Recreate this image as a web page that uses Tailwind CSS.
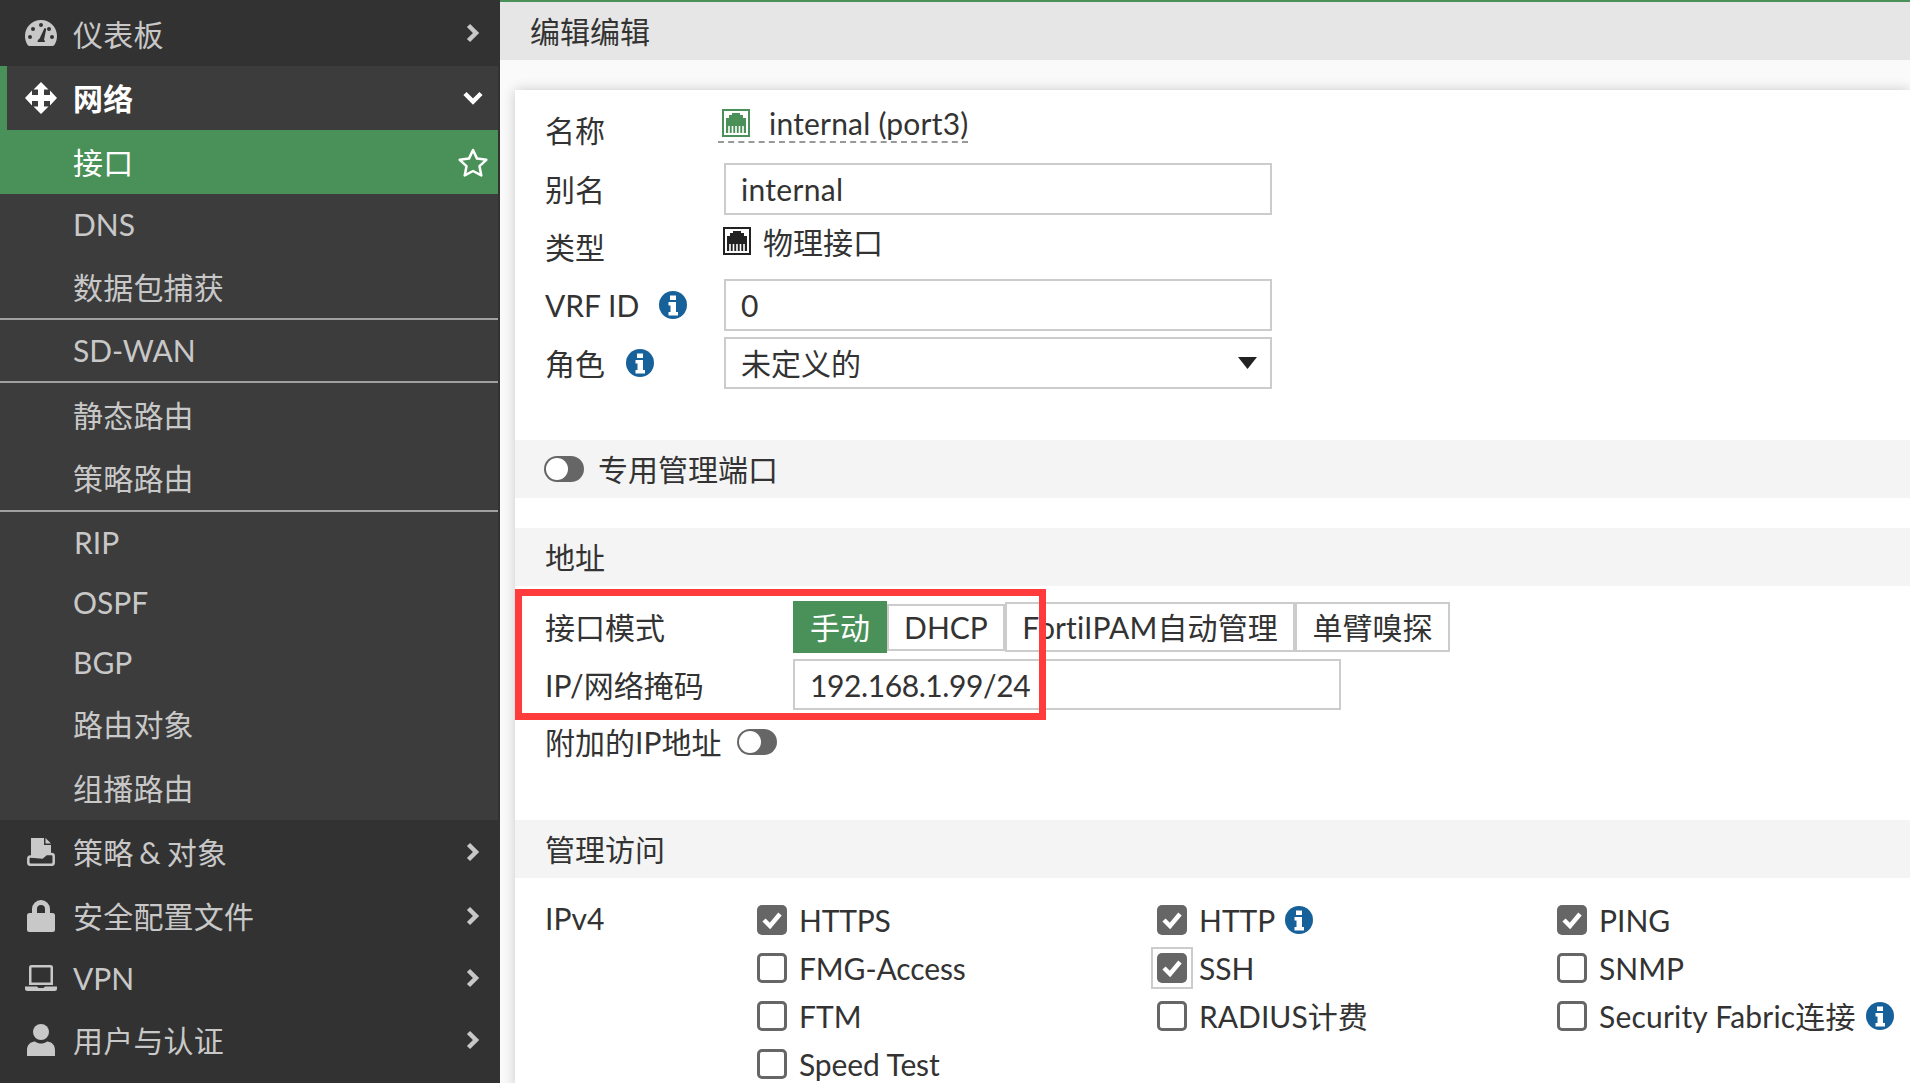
<!DOCTYPE html>
<html lang="zh">
<head>
  <meta charset="UTF-8">
  <title>编辑编辑</title>
  <script src="https://cdn.jsdelivr.net/npm/@tailwindcss/browser@4"></script>
</head>
<body class="h-[1083px] overflow-hidden bg-white font-['Lato','Noto_Sans_CJK_SC',sans-serif] text-[30px] text-[#333]">
<div class="flex h-[1083px]">

  <!-- Sidebar -->
  <nav class="w-[500px] shrink-0 bg-[#323232] text-[#c8c8c8] leading-[36px] tracking-[0.2px]">
    <div class="flex h-[66px] items-center">
      <svg class="ml-[25px] w-[32px] h-[26px]" viewBox="0 0 32 26"><path fill="#c8c8c8" fill-rule="evenodd" d="M16 0C7 0 0 7 0 16c0 3 .8 6 2.300 8.500.4.700 1.100 1.500 2 1.500h23.400c.9 0 1.600-.8 2-1.500C31.200 22 32 19 32 16 32 7 25 0 16 0zM5 19a2 2 0 1 1 0-4 2 2 0 0 1 0 4zm3-8a2 2 0 1 1 0-4 2 2 0 0 1 0 4zm8-4a2 2 0 1 1 0-4 2 2 0 0 1 0 4zm-3.500 15c0-1.500.8-2.700 2-3.300L19.500 8l1.800.7-2.300 11c.6.600 1 1.400 1 2.300h-7.500zM24 11a2 2 0 1 1 0-4 2 2 0 0 1 0 4zm3 8a2 2 0 1 1 0-4 2 2 0 0 1 0 4z"/></svg>
      <span class="ml-[16px] pt-[1px]">仪表板</span>
      <svg class="ml-auto mr-[20px] w-[14px] h-[20px]" viewBox="0 0 14 20"><path fill="none" stroke="#c8c8c8" stroke-width="4.500" d="M2.500 2.500 10 10l-7.500 7.500"/></svg>
    </div>

    <div class="w-[498px] bg-[#3c3c3c]">
      <div class="flex h-[64px] items-center border-l-[7px] border-[#4a9159] bg-[#3c3c3c] font-bold text-white">
        <svg class="ml-[18px] w-[32px] h-[32px]" viewBox="0 0 32 32"><path fill="#fff" d="M16 0l7.500 7.500h-4.500V13h6V8.500L32 16l-7 7.500V19h-6v5.500h4.500L16 32l-7.500-7.500H13V19H7v4.500L0 16l7-7.500V13h6V7.500H8.500z"/></svg>
        <span class="ml-[16px]">网络</span>
        <svg class="ml-auto mr-[15px] w-[20px] h-[14px]" viewBox="0 0 20 14"><path fill="none" stroke="#fff" stroke-width="4.500" d="M2 2.500 10 10.500l8-8"/></svg>
      </div>
      <div class="flex h-[64px] items-center bg-[#4a9159] pl-[73px] text-white">
        <span>接口</span>
        <svg class="ml-auto mr-[10px] w-[30px] h-[29px]" viewBox="0 0 30 29"><path fill="none" stroke="#fff" stroke-width="2.500" stroke-linejoin="round" d="M15 2l4 8.600 9.300 1.200-6.800 6.400 1.800 9.200L15 23l-8.300 4.400 1.800-9.200-6.800-6.400L11 10.600z"/></svg>
      </div>
      <div class="flex h-[61px] items-center pb-[2px] pl-[73px] tracking-normal">DNS</div>
      <div class="flex h-[63px] items-center pl-[73px]">数据包捕获</div>
      <div class="h-[2px] bg-[#a0a0a0]"></div>
      <div class="flex h-[61px] items-center pb-[2px] pl-[73px] tracking-normal">SD-WAN</div>
      <div class="h-[2px] bg-[#a0a0a0]"></div>
      <div class="flex h-[64px] items-center pb-[1px] pl-[73px]">静态路由</div>
      <div class="flex h-[63px] items-center pb-[1px] pl-[73px]">策略路由</div>
      <div class="h-[2px] bg-[#a0a0a0]"></div>
      <div class="flex h-[60px] items-center pl-[74px] tracking-normal">RIP</div>
      <div class="flex h-[60px] items-center pl-[73px] tracking-normal">OSPF</div>
      <div class="flex h-[60px] items-center pl-[73px] tracking-normal">BGP</div>
      <div class="flex h-[64px] items-center pl-[73px]">路由对象</div>
      <div class="flex h-[64px] items-center pl-[73px]">组播路由</div>
    </div>

    <div class="flex h-[64px] items-center">
      <svg class="ml-[27px] w-[28px] h-[28px]" viewBox="0 0 28 28"><path fill="#c8c8c8" d="M4 0h13v7h7v9h-5l-4 3.500H4z"/><path fill="#c8c8c8" d="M18.500 0 24 5.500h-5.500z"/><path fill="none" stroke="#c8c8c8" stroke-width="2.500" d="M4 18.500H3.500q-2.200 0-2.200 2.500v3.500q0 2.300 2.500 2.300h20.400q2.500 0 2.500-2.300V18q0-2-2.500-2h-5l-4 3.500z"/></svg>
      <span class="ml-[18px] [word-spacing:-2px]">策略 &amp; 对象</span>
      <svg class="ml-auto mr-[20px] w-[14px] h-[20px]" viewBox="0 0 14 20"><path fill="none" stroke="#c8c8c8" stroke-width="4.500" d="M2.500 2.500 10 10l-7.500 7.500"/></svg>
    </div>
    <div class="flex h-[64px] items-center">
      <svg class="ml-[27px] w-[28px] h-[32px]" viewBox="0 0 28 32"><path fill="#c8c8c8" fill-rule="evenodd" d="M5 13V9a9 9 0 0 1 18 0v4h2.500a2.500 2.500 0 0 1 2.500 2.500v14a2.500 2.500 0 0 1-2.500 2.500h-23A2.500 2.500 0 0 1 0 29.500v-14A2.500 2.500 0 0 1 2.500 13zm5 0h8V9a4 4 0 0 0-8 0z"/></svg>
      <span class="ml-[18px]">安全配置文件</span>
      <svg class="ml-auto mr-[20px] w-[14px] h-[20px]" viewBox="0 0 14 20"><path fill="none" stroke="#c8c8c8" stroke-width="4.500" d="M2.500 2.500 10 10l-7.500 7.500"/></svg>
    </div>
    <div class="flex h-[60px] items-center">
      <svg class="ml-[25px] w-[32px] h-[26px]" viewBox="0 0 32 26"><path fill="#c8c8c8" fill-rule="evenodd" d="M4 2.500A2.500 2.500 0 0 1 6.500 0h19A2.500 2.500 0 0 1 28 2.500V20H4zM6.500 2.500V17.500h19V2.500z"/><path fill="#c8c8c8" d="M0 21.500h12l1.500 1.500h5l1.500-1.500h12v2a2.500 2.500 0 0 1-2.500 2.500h-27A2.500 2.500 0 0 1 0 23.500z"/></svg>
      <span class="ml-[16px] tracking-normal">VPN</span>
      <svg class="ml-auto mr-[20px] w-[14px] h-[20px]" viewBox="0 0 14 20"><path fill="none" stroke="#c8c8c8" stroke-width="4.500" d="M2.500 2.500 10 10l-7.500 7.500"/></svg>
    </div>
    <div class="flex h-[64px] items-center">
      <svg class="ml-[27px] w-[28px] h-[32px]" viewBox="0 0 28 32"><circle cx="14" cy="8" r="8" fill="#c8c8c8"/><path fill="#c8c8c8" d="M0 32v-6c0-5 3.500-8.500 8-8.500 2 1.500 4 2 6 2s4-.5 6-2c4.500 0 8 3.500 8 8.500v6z"/></svg>
      <span class="ml-[18px]">用户与认证</span>
      <svg class="ml-auto mr-[20px] w-[14px] h-[20px]" viewBox="0 0 14 20"><path fill="none" stroke="#c8c8c8" stroke-width="4.500" d="M2.500 2.500 10 10l-7.500 7.500"/></svg>
    </div>
  </nav>

  <!-- Main -->
  <main class="flex-1 min-w-0 bg-[#fafafa]">
    <div class="flex h-[60px] items-center border-t-2 border-[#4a9159] bg-[#e6e6e6] pl-[30px]">编辑编辑</div>

    <div class="relative ml-[15px] mt-[30px] h-[1000px] bg-white shadow-[0_0_12px_rgba(0,0,0,0.2)] pt-[15px] leading-[36px]">

      <!-- 名称 -->
      <div class="flex h-[58px] pl-[30px]">
        <span class="w-[179px] pt-[7px]">名称</span>
        <div class="-ml-[6px] flex h-[38px] items-center border-b-2 border-dashed border-[#999] pl-[4px]">
          <svg class="w-[28px] h-[28px]" viewBox="0 0 28 28"><rect x="1" y="1" width="26" height="26" fill="#fff" stroke="#4a9159" stroke-width="2"/><path fill="#4a9159" d="M4 16V9h3V6h3V4h8v2h3v3h3v7zM4 16h20v8H4z"/><path stroke="#fff" stroke-width="1.600" d="M7 17v7M10.500 17v7M14 17v7M17.500 17v7M21 17v7"/></svg>
          <span class="ml-[19px] tracking-[0.2px]">internal (port3)</span>
        </div>
      </div>

      <!-- 别名 -->
      <div class="flex h-[52px] items-center pl-[30px]">
        <span class="w-[179px]">别名</span>
        <div class="flex h-[52px] w-[548px] items-center border-2 border-[#ccc] pl-[15px] tracking-[0.3px]">internal</div>
      </div>

      <!-- 类型 -->
      <div class="mt-[6px] flex h-[58px] pl-[30px]">
        <span class="w-[178px] pt-[8px]">类型</span>
        <svg class="mt-[6px] w-[28px] h-[28px]" viewBox="0 0 28 28"><rect x="1" y="1" width="26" height="26" fill="#fff" stroke="#222" stroke-width="2"/><path fill="#222" d="M4 16V9h3V6h3V4h8v2h3v3h3v7zM4 16h20v8H4z"/><path stroke="#fff" stroke-width="1.600" d="M7 17v7M10.500 17v7M14 17v7M17.500 17v7M21 17v7"/></svg>
        <span class="ml-[12px] pt-[3px]">物理接口</span>
      </div>

      <!-- VRF ID -->
      <div class="flex h-[52px] items-center pl-[30px]">
        <span class="flex w-[179px] items-center">VRF ID
          <svg class="ml-[20px] w-[28px] h-[28px]" viewBox="0 0 28 28"><circle cx="14" cy="14" r="14" fill="#17619a"/><path fill="#fff" d="M11 4.500h6v4.500h-6zM9.500 11h7.500v10h2v3.500H9.500V21h2v-6.500h-2z"/></svg>
        </span>
        <div class="flex h-[52px] w-[548px] items-center border-2 border-[#ccc] pl-[15px]">0</div>
      </div>

      <!-- 角色 -->
      <div class="mt-[6px] flex h-[52px] items-center pl-[30px]">
        <span class="flex w-[179px] items-center">角色
          <svg class="ml-[21px] w-[28px] h-[28px]" viewBox="0 0 28 28"><circle cx="14" cy="14" r="14" fill="#17619a"/><path fill="#fff" d="M11 4.500h6v4.500h-6zM9.500 11h7.500v10h2v3.500H9.500V21h2v-6.500h-2z"/></svg>
        </span>
        <div class="flex h-[52px] w-[548px] items-center border-2 border-[#ccc] pl-[15px]">未定义的
          <svg class="ml-auto mr-[13px] w-[19px] h-[12px]" viewBox="0 0 19 12"><path fill="#222" d="M0 0h19l-9.500 12z"/></svg>
        </div>
      </div>

      <!-- 专用管理端口 -->
      <div class="mt-[51px] flex h-[58px] items-center bg-[#f4f4f4] pl-[29px]">
        <span class="flex h-[26px] w-[40px] items-center rounded-full bg-[#666] pl-[2px]"><span class="h-[22px] w-[22px] rounded-full bg-white"></span></span>
        <span class="ml-[14px]">专用管理端口</span>
      </div>

      <!-- 地址 -->
      <div class="mt-[30px] flex h-[58px] items-center bg-[#f4f4f4] pl-[30px]">地址</div>

      <div class="mt-[15px] flex h-[52px] items-center pl-[30px]">
        <span class="w-[248px]">接口模式</span>
        <div class="flex items-center">
          <span class="flex h-[52px] w-[94px] items-center justify-center bg-[#4a9159] text-white">手动</span>
          <span class="flex h-[47px] w-[118px] items-center justify-center border-2 border-[#ccc]">DHCP</span>
          <span class="flex h-[50px] w-[290px] items-center justify-center border-2 border-[#ccc] tracking-[0.1px]">FortiIPAM自动管理</span>
          <span class="flex h-[50px] w-[155px] items-center justify-center border-2 border-[#ccc]">单臂嗅探</span>
        </div>
      </div>

      <div class="mt-[6px] flex h-[51px] items-center pl-[30px]">
        <span class="w-[248px]">IP/网络掩码</span>
        <div class="flex h-[51px] w-[548px] items-center border-2 border-[#ccc] pl-[15px] tracking-[-0.4px]">192.168.1.99/24</div>
      </div>

      <div class="mt-[19px] flex h-[26px] items-center pl-[30px]">
        <span>附加的IP地址</span>
        <span class="ml-[16px] flex h-[26px] w-[40px] items-center rounded-full bg-[#666] pl-[2px]"><span class="h-[22px] w-[22px] rounded-full bg-white"></span></span>
      </div>

      <!-- 管理访问 -->
      <div class="mt-[65px] flex h-[58px] items-center bg-[#f4f4f4] pl-[30px]">管理访问</div>

      <div class="mt-[27px] flex pl-[30px]">
        <span class="-mt-[5px] w-[212px] shrink-0">IPv4</span>
        <div class="grid w-[1200px] shrink-0 grid-cols-[400px_400px_400px] auto-rows-[48px]">
          <label class="flex h-[30px] items-center gap-[12px] tracking-[-0.2px]"><svg class="w-[30px] h-[30px]" viewBox="0 0 30 30"><rect width="30" height="30" rx="5" fill="#666"/><path fill="none" stroke="#fff" stroke-width="4.500" d="M7 15l6 6 10-12"/></svg>HTTPS</label>
          <label class="flex h-[30px] items-center gap-[12px]"><svg class="w-[30px] h-[30px]" viewBox="0 0 30 30"><rect width="30" height="30" rx="5" fill="#666"/><path fill="none" stroke="#fff" stroke-width="4.500" d="M7 15l6 6 10-12"/></svg>HTTP
            <svg class="-ml-[2px] w-[28px] h-[28px]" viewBox="0 0 28 28"><circle cx="14" cy="14" r="14" fill="#17619a"/><path fill="#fff" d="M11 4.500h6v4.500h-6zM9.500 11h7.500v10h2v3.500H9.500V21h2v-6.500h-2z"/></svg></label>
          <label class="flex h-[30px] items-center gap-[12px]"><svg class="w-[30px] h-[30px]" viewBox="0 0 30 30"><rect width="30" height="30" rx="5" fill="#666"/><path fill="none" stroke="#fff" stroke-width="4.500" d="M7 15l6 6 10-12"/></svg>PING</label>

          <label class="flex h-[30px] items-center gap-[12px] tracking-[-0.1px]"><span class="h-[30px] w-[30px] rounded-[5px] border-[3px] border-[#666]"></span>FMG-Access</label>
          <label class="flex h-[30px] items-center gap-[12px]"><span class="relative h-[30px] w-[30px]"><svg class="w-[30px] h-[30px]" viewBox="0 0 30 30"><rect width="30" height="30" rx="5" fill="#666"/><path fill="none" stroke="#fff" stroke-width="4.500" d="M7 15l6 6 10-12"/></svg><span class="absolute -left-[6px] -top-[6px] h-[42px] w-[42px] border-2 border-[#ccc]"></span></span>SSH</label>
          <label class="flex h-[30px] items-center gap-[12px]"><span class="h-[30px] w-[30px] rounded-[5px] border-[3px] border-[#666]"></span>SNMP</label>

          <label class="flex h-[30px] items-center gap-[12px]"><span class="h-[30px] w-[30px] rounded-[5px] border-[3px] border-[#666]"></span>FTM</label>
          <label class="flex h-[30px] items-center gap-[12px]"><span class="h-[30px] w-[30px] rounded-[5px] border-[3px] border-[#666]"></span>RADIUS计费</label>
          <label class="flex h-[30px] items-center gap-[12px] tracking-[0.2px]"><span class="h-[30px] w-[30px] rounded-[5px] border-[3px] border-[#666]"></span>Security Fabric连接
            <svg class="-ml-[2px] w-[28px] h-[28px]" viewBox="0 0 28 28"><circle cx="14" cy="14" r="14" fill="#17619a"/><path fill="#fff" d="M11 4.500h6v4.500h-6zM9.500 11h7.500v10h2v3.500H9.500V21h2v-6.500h-2z"/></svg></label>

          <label class="flex h-[30px] items-center gap-[12px] tracking-[-0.1px]"><span class="h-[30px] w-[30px] rounded-[5px] border-[3px] border-[#666]"></span>Speed Test</label>
        </div>
      </div>

      <!-- red annotation over the screenshot -->
      <div class="absolute left-0 top-[499px] h-[131px] w-[531px] border-[7px] border-[#ff3b3b]"></div>
    </div>
  </main>
</div>
</body>
</html>
